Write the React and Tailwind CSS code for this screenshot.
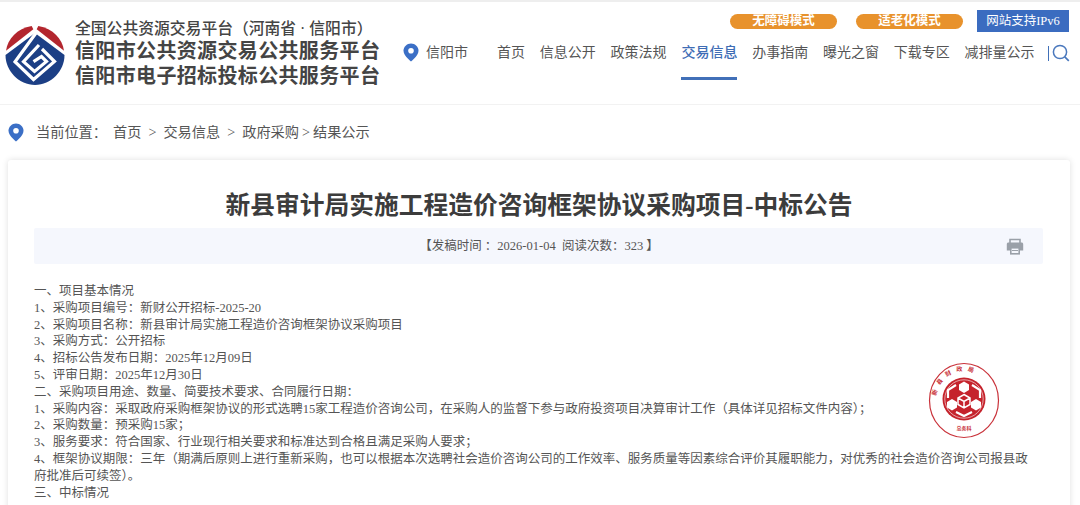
import React from "react";

const navItems = ["首页", "信息公开", "政策法规", "交易信息", "办事指南", "曝光之窗", "下载专区", "减排量公示"];

const bodyLines = [
  "一、项目基本情况",
  "1、采购项目编号：新财公开招标-2025-20",
  "2、采购项目名称：新县审计局实施工程造价咨询框架协议采购项目",
  "3、采购方式：公开招标",
  "4、招标公告发布日期：2025年12月09日",
  "5、评审日期：2025年12月30日",
  "二、采购项目用途、数量、简要技术要求、合同履行日期：",
  "1、采购内容：采取政府采购框架协议的形式选聘15家工程造价咨询公司，在采购人的监督下参与政府投资项目决算审计工作（具体详见招标文件内容）；",
  "2、采购数量：预采购15家；",
  "3、服务要求：符合国家、行业现行相关要求和标准达到合格且满足采购人要求；",
  "4、框架协议期限：三年（期满后原则上进行重新采购，也可以根据本次选聘社会造价咨询公司的工作效率、服务质量等因素综合评价其履职能力，对优秀的社会造价咨询公司报县政府批准后可续签）。",
  "三、中标情况",
];

const PinIcon = ({ className }) => (
  <svg className={className} viewBox="0 0 16 19">
    <path
      d="M8 0.5C3.8 0.5 0.5 3.8 0.5 7.8C0.5 12 5 16 8 18.5C11 16 15.5 12 15.5 7.8C15.5 3.8 12.2 0.5 8 0.5Z"
      fill="#3b6fc6"
    />
    <circle cx="8" cy="7.8" r="2.8" fill="#fff" />
  </svg>
);

const Logo = () => (
  <svg className="w-[60px] h-[60px] shrink-0" viewBox="0 0 60 60">
    <path d="M1 25.7C2.5 14 12 3.5 26.7 1L28.3 4.3Z" fill="#b3262e" />
    <path d="M59 25.7C57.5 14 48 3.5 33.3 1L31.7 4.3Z" fill="#b3262e" />
    <path d="M30 8L59.5 30C59.5 46 46 60 30 60C14 60 0.5 46 0.5 30Z" fill="#1c3f85" />
    <path d="M31 8L10 36.7L28.5 54.5L49.5 36.5L37 24" fill="none" stroke="#fff" strokeWidth="3.2" />
    <path d="M34 20L18.5 36.7L29.5 46.5L41.5 36.5L36.5 31.5L28.5 36.7" fill="none" stroke="#fff" strokeWidth="3.2" />
  </svg>
);

const Stamp = () => (
  <svg className="absolute left-[928px] top-[362px] w-[72px] h-[78px]" viewBox="0 0 72 78">
    <defs>
      <path id="stampArc" d="M8 38A28.5 29 0 1 1 65 38" />
    </defs>
    <ellipse cx="36" cy="38.5" rx="34.5" ry="37" fill="none" stroke="#c9323a" strokeWidth="1.2" />
    <text fontSize="6" fontWeight="700" fill="#c9323a" fontFamily="'Noto Sans CJK SC', sans-serif" letterSpacing="5">
      <textPath href="#stampArc" startOffset="4">新县财政局</textPath>
    </text>
    <text x="36" y="68" textAnchor="middle" fontSize="5" fontWeight="700" fill="#c9323a" fontFamily="'Noto Sans CJK SC', sans-serif">总务科</text>
    <circle cx="36" cy="37" r="21.5" fill="#c5232c" />
    <circle cx="36" cy="37" r="19.2" fill="none" stroke="#fff" strokeWidth="0.6" />
    <path d="M36 19.5L41 22.5V28L36 31L31 28V22.5Z" fill="#fff" />
    <path d="M24 37L29 40V45.5L24 48.5L19 45.5V40Z" fill="#fff" />
    <path d="M48 37L53 40V45.5L48 48.5L43 45.5V40Z" fill="#fff" />
    <path d="M28 23L20 28V36M44 23L52 28V36" fill="none" stroke="#fff" strokeWidth="2.2" />
    <path d="M36 32.5L42 36V42.5L36 46L30 42.5V36ZM30 36L36 39.5L42 36M36 39.5V46" fill="none" stroke="#fff" strokeWidth="1.5" />
    <path d="M28 50L36 54L44 50" fill="none" stroke="#fff" strokeWidth="2.2" />
  </svg>
);

const PrintIcon = () => (
  <svg className="w-[18px] h-[17px]" viewBox="0 0 18 17">
    <path d="M4 5V1.5H14V5" fill="none" stroke="#9aa0a8" strokeWidth="1.6" />
    <path d="M2.5 4.5H15.5C16.5 4.5 17.2 5.2 17.2 6.2V12.5H14V9H4V12.5H0.8V6.2C0.8 5.2 1.5 4.5 2.5 4.5Z" fill="#9aa0a8" />
    <rect x="4.8" y="9.8" width="8.4" height="6" fill="none" stroke="#9aa0a8" strokeWidth="1.6" />
    <rect x="6" y="12" width="6" height="1" fill="#9aa0a8" />
  </svg>
);

const App = () => {
  return (
    <div className="relative h-[505px] overflow-hidden bg-white font-['Liberation_Serif','Noto_Sans_CJK_SC',sans-serif] text-[#555]">
      <div className="h-[2px] bg-[#eeeeee]" />

      <header className="flex h-[103px] border-b border-[#f2f2f2]">
        <div className="ml-[5px] mt-[23px]">
          <Logo />
        </div>
        <div className="ml-[10px] mt-[17px] w-[305px] text-[#444]">
          <div className="text-[15.8px] leading-[20px] font-medium whitespace-nowrap">全国公共资源交易平台（河南省 · 信阳市）</div>
          <div className="text-[20px] leading-[25px] font-bold tracking-[0.35px] whitespace-nowrap">信阳市公共资源交易公共服务平台</div>
          <div className="text-[20px] leading-[25px] font-bold tracking-[0.35px] whitespace-nowrap">信阳市电子招标投标公共服务平台</div>
        </div>

        <div className="ml-[23px] mt-[41px] flex items-start">
          <PinIcon className="w-[16px] h-[19px]" />
          <span className="ml-[7px] mt-[1px] text-[14px] leading-[18px]">信阳市</span>
        </div>

        <div className="ml-[29px] w-[583px]">
          <div className="mt-[8px] flex items-center justify-end pr-[11px]">
            <div className="w-[107px] h-[15px] rounded-full bg-[#e8922c] text-white text-[12.5px] leading-[15px] font-bold text-center">无障碍模式</div>
            <div className="ml-[19px] w-[107px] h-[15px] rounded-full bg-[#e8922c] text-white text-[12.5px] leading-[15px] font-bold text-center">适老化模式</div>
            <div className="ml-[14px] w-[92px] h-[22px] bg-[#3b6cc0] text-white text-[12.5px] leading-[22px] text-center">网站支持IPv6</div>
          </div>
          <nav className="mt-[9px] flex items-start gap-[14.8px] text-[14px]">
            {navItems.map((item) => (
              <div
                key={item}
                className={
                  item === "交易信息"
                    ? "h-[39px] leading-[24px] border-b-[3px] border-[#4170b8] text-[#3f6db5] font-medium whitespace-nowrap"
                    : "h-[39px] leading-[24px] whitespace-nowrap"
                }
              >
                {item}
              </div>
            ))}
            <div className="flex items-center h-[24px] -ml-[1px]">
              <span className="w-[1px] h-[15px] bg-[#4170b8]" />
              <svg className="ml-[3px] w-[18px] h-[18px]" viewBox="0 0 18 18">
                <circle cx="8" cy="8" r="6.6" fill="none" stroke="#4a78bd" strokeWidth="1.5" />
                <path d="M12.8 12.8L16.8 16.8" stroke="#4a78bd" strokeWidth="1.7" />
              </svg>
            </div>
          </nav>
        </div>
      </header>

      <div className="flex items-center h-[55px] pl-[8px] text-[14.2px]">
        <PinIcon className="w-[16px] h-[19px]" />
        <span className="ml-[12px] w-[77px]">当前位置：</span>
        <span>首页</span>
        <span className="mx-[7px]">&gt;</span>
        <span>交易信息</span>
        <span className="mx-[7px]">&gt;</span>
        <span>政府采购</span>
        <span className="mx-[3px]">&gt;</span>
        <span>结果公示</span>
      </div>

      <main className="mx-[8px] w-[1062px] h-[400px] rounded-[3px] bg-white shadow-[0_0_6px_rgba(0,0,0,0.13)] px-[26px] pt-[30px]">
        <h1 className="text-center text-[24.75px] leading-[32px] font-bold text-[#3c3c3c]">
          新县审计局实施工程造价咨询框架协议采购项目-中标公告
        </h1>
        <div className="mt-[6px] flex items-center h-[36px] w-[1009px] bg-[#f5f7fd] rounded-[2px] text-[12.5px]">
          <div className="flex-1 text-center pl-[38px]">【发稿时间 ：2026-01-04&nbsp;&nbsp;阅读次数：323 】</div>
          <div className="mr-[19px]">
            <PrintIcon />
          </div>
        </div>
        <div className="mt-[19px] w-[995px] text-[12.5px] leading-[16.8px]">
          {bodyLines.map((line) => (
            <p key={line}>{line}</p>
          ))}
        </div>
      </main>

      <Stamp />
    </div>
  );
};

export default App;
